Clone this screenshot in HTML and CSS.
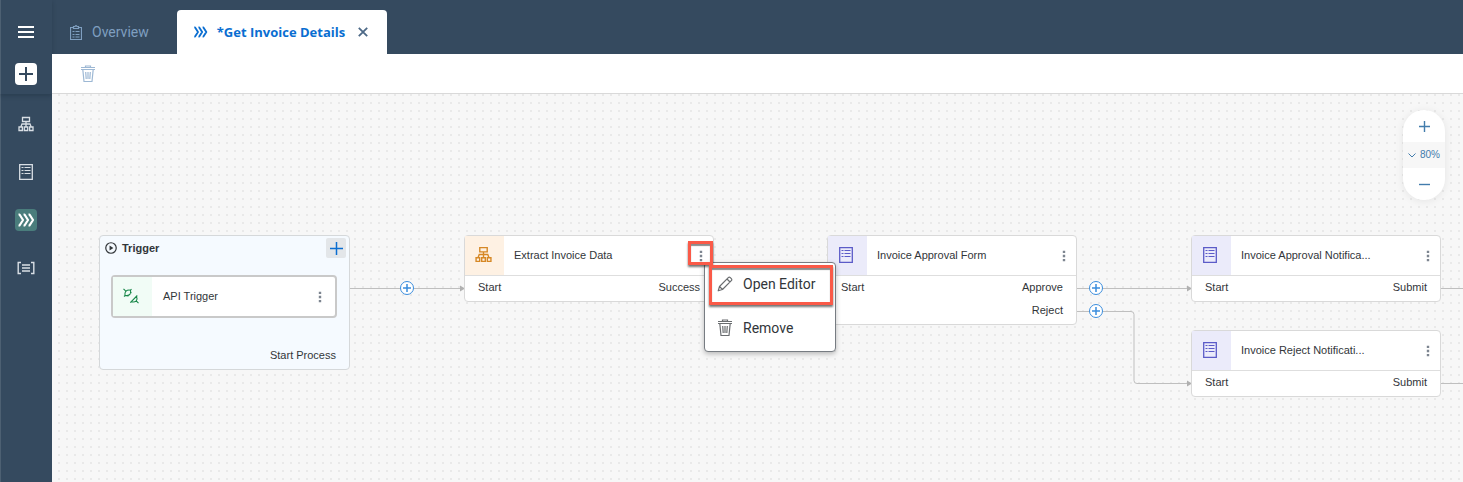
FILE: index.html
```html
<!DOCTYPE html>
<html lang="en">
<head>
<meta charset="utf-8">
<meta name="viewport" content="width=device-width, initial-scale=1">
<title>Get Invoice Details</title>
<link rel="stylesheet" href="styles.css">
</head>
<body>
<svg class="defs" aria-hidden="true">
  <symbol id="i-flow" viewBox="0 0 16 16"><g fill="none" stroke="currentColor" stroke-width="1.3"><path d="M4.500 1.500h7v4h-7zM8 5.500v5M3 10.500l1-2.500h8l1 2.500M1 11h3.400v3.500H1zM6.300 11h3.400v3.500H6.300zM11.600 11H15v3.500h-3.400z"/></g></symbol>
  <symbol id="i-form" viewBox="0 0 16 18"><g fill="none" stroke="currentColor"><path stroke-width="1.300" d="M1.700 1.700h12.600v14.600H1.700z"/><path d="M3.500 4.500h2M6.500 4.500h6M3.500 7.500h2M6.500 7.500h6M3.500 10.500h2M6.500 10.500h6"/></g></symbol>
  <symbol id="i-chev" viewBox="0 0 18 14"><path fill="none" stroke="currentColor" stroke-width="2.200" stroke-linejoin="round" d="M1.500 1.500h1L6 7l-3.500 5.500h-1M6.500 1.500h1L11 7l-3.500 5.500h-1M11.500 1.500h1L16 7l-3.500 5.500h-1"/></symbol>
  <symbol id="i-trash" viewBox="0 0 16 18"><path fill="none" stroke="currentColor" stroke-width="1.200" d="M1 2.500h14M5.500 2V1h5v1M1 4.500h14M2.800 4.500l1.200 12h8l1.200-12M5.700 7l.5 7M8 7v7M10.300 7l-.5 7"/></symbol>
  <symbol id="i-dots" viewBox="0 0 4 12"><path fill="currentColor" d="M.8.700h2.400v2.400H.8zM.8 4.800h2.400v2.400H.8zM.8 8.900h2.400v2.400H.8z"/></symbol>
  <symbol id="i-clip" viewBox="0 0 12 15"><g fill="none" stroke="currentColor" stroke-width="1.200"><path d="M3.500 2.500h-3v12h11v-12h-3M3.500 1.500h1.500L6 .5l1 1h1.500v2h-5zM5.500 6.500h4M5.500 9.500h4M5.500 12h4M2.500 6.500h2M2.500 9.500h2M2.500 12h2"/></g></symbol>
  <symbol id="i-plus" viewBox="0 0 14 14"><path fill="none" stroke="currentColor" stroke-width="2" d="M7 0v14M0 7h14"/></symbol>
</svg>

<nav class="rail" aria-label="Main">
  <div class="rail-top">
    <button class="rail-btn" aria-label="Menu"><svg width="16" height="14" viewBox="0 0 16 14"><path d="M0 2h16M0 7h16M0 12h16" stroke="currentColor" stroke-width="2"/></svg></button>
    <button class="rail-btn add" aria-label="Add"><svg width="14" height="14"><use href="#i-plus"/></svg></button>
  </div>
  <div class="rail-list">
    <button class="rail-btn" aria-label="Processes"><svg width="16" height="16"><use href="#i-flow"/></svg></button>
    <button class="rail-btn" aria-label="Forms"><svg width="16" height="18"><use href="#i-form"/></svg></button>
    <button class="rail-btn active" aria-label="Automations"><svg width="18" height="14"><use href="#i-chev"/></svg></button>
    <button class="rail-btn" aria-label="Data types"><svg width="18" height="14" viewBox="0 0 18 14"><path fill="none" stroke="currentColor" stroke-width="1.400" d="M4 1.500H1.200v11H4M14 1.500h2.800v11H14M5 4h8M5 7h8M5 10h8"/></svg></button>
  </div>
</nav>

<div class="app">
  <header class="tabs">
    <button class="tab"><svg width="12" height="15"><use href="#i-clip"/></svg><span>Overview</span></button>
    <div class="tab current">
      <button class="tab-name"><svg width="15" height="12"><use href="#i-chev"/></svg><span>*Get Invoice Details</span></button>
      <button class="close" aria-label="Close tab"><svg width="10" height="10" viewBox="0 0 10 10"><path d="M.8.800l8.400 8.400M9.200.800L.8 9.200" stroke="currentColor" stroke-width="1.800"/></svg></button>
    </div>
  </header>
  <div class="toolbar"><button class="delete" aria-label="Delete"><svg width="16" height="18"><use href="#i-trash"/></svg></button></div>

  <main class="canvas">
    <svg class="edges" aria-hidden="true">
      <g class="line">
        <path d="M298 194.500h114M1025 194.500h114M1025 217.500h54q3 0 3 3v66q0 3 3 3h54M1389 194.500h600M1389 289.500h600"/>
      </g>
      <path class="tip" d="M408 191.500l5 3-5 3zM1135 191.500l5 3-5 3zM1135 286.500l5 3-5 3z"/>
      <g class="joint">
        <g><circle cx="355" cy="194" r="6.500"/><path d="M355 190v8M351 194h8"/></g>
        <g><circle cx="1044" cy="194" r="6.500"/><path d="M1044 190v8M1040 194h8"/></g>
        <g><circle cx="1044" cy="217" r="6.500"/><path d="M1044 213v8M1040 217h8"/></g>
      </g>
    </svg>

    <section class="trigger">
      <div class="trigger-head">
        <svg width="12" height="12" viewBox="0 0 11 11"><circle cx="5.500" cy="5.500" r="4.800" fill="none" stroke="currentColor" stroke-width="1.100"/><path d="M4.200 3.200l3.500 2.300-3.500 2.300z" fill="currentColor"/></svg>
        <h2>Trigger</h2>
        <button class="trigger-add" aria-label="Add trigger"><svg width="13" height="13" viewBox="0 0 13 13"><path d="M6.500 0v13M0 6.500h13" stroke="currentColor" stroke-width="1.500"/></svg></button>
      </div>
      <div class="trigger-card">
        <span class="icon green"><svg width="16" height="16" viewBox="0 0 16 16"><path fill="none" stroke="currentColor" stroke-width="1.100" d="M.5.800l2.300 2.400M2.800 3.200Q5 1.500 7.500 2.200M2.800 3.200Q1.500 5 2 7.500M8.500 1.200L7.500 2.200q.8 3-.8 4.300Q5 8 2 7.500l-1 1M7 4.500l1.600.2M4.800 6.800l.2 1.700M15.500 15.200l-2.300-2.300M14.300 7.500l-7 7.200M13.500 8.500q1.300 2.600-.3 4.400-2 1.800-4.900.8"/></svg></span>
        <span class="name">API Trigger</span>
        <button class="more" aria-label="More"><svg width="4" height="12"><use href="#i-dots"/></svg></button>
      </div>
      <p class="out">Start Process</p>
    </section>

    <section class="node n-extract">
      <div class="node-head"><span class="icon orange"><svg width="17" height="17"><use href="#i-flow"/></svg></span><span class="name">Extract Invoice Data</span><button class="more" aria-label="More"><svg width="4" height="12"><use href="#i-dots"/></svg></button></div>
      <div class="ports"><span>Start</span><span>Success</span></div>
    </section>
    <section class="node n-form">
      <div class="node-head"><span class="icon violet"><svg width="16" height="18"><use href="#i-form"/></svg></span><span class="name">Invoice Approval Form</span><button class="more" aria-label="More"><svg width="4" height="12"><use href="#i-dots"/></svg></button></div>
      <div class="ports"><span>Start</span><span>Approve</span></div>
      <div class="ports"><span></span><span>Reject</span></div>
    </section>
    <section class="node n-approved">
      <div class="node-head"><span class="icon violet"><svg width="16" height="18"><use href="#i-form"/></svg></span><span class="name">Invoice Approval Notifica...</span><button class="more" aria-label="More"><svg width="4" height="12"><use href="#i-dots"/></svg></button></div>
      <div class="ports"><span>Start</span><span>Submit</span></div>
    </section>
    <section class="node n-rejected">
      <div class="node-head"><span class="icon violet"><svg width="16" height="18"><use href="#i-form"/></svg></span><span class="name">Invoice Reject Notificati...</span><button class="more" aria-label="More"><svg width="4" height="12"><use href="#i-dots"/></svg></button></div>
      <div class="ports"><span>Start</span><span>Submit</span></div>
    </section>

    <div class="menu" role="menu">
      <button role="menuitem"><svg width="16" height="16" viewBox="0 0 16 16"><path fill="none" stroke="currentColor" stroke-width="1.200" stroke-linejoin="round" d="M1.200 14.800l1.300-4.300 8.800-8.800q1-1 2 0l1 1q1 1 0 2l-8.800 8.800zM10 3l3 3M2.500 10.500l3 3"/></svg><span>Open Editor</span></button>
      <button role="menuitem"><svg width="16" height="18"><use href="#i-trash"/></svg><span>Remove</span></button>
    </div>
    <div class="mark mark-more"></div>
    <div class="mark mark-open"></div>

    <div class="zoom">
      <button aria-label="Zoom in"><svg width="11" height="11" viewBox="0 0 11 11"><path d="M5.500 0v11M0 5.500h11" stroke="currentColor" stroke-width="1.400"/></svg></button>
      <button class="level"><svg width="8" height="5" viewBox="0 0 8 5"><path d="M.5.500L4 4 7.500.500" fill="none" stroke="currentColor"/></svg><span>80%</span></button>
      <button aria-label="Zoom out"><svg width="11" height="11" viewBox="0 0 11 11"><path d="M0 5.500h11" stroke="currentColor" stroke-width="1.400"/></svg></button>
    </div>
  </main>
</div>
</body>
</html>
```
FILE: styles.css
```css
* { box-sizing: border-box; }
body {
  margin: 0;
  min-height: 100vh;
  display: flex;
  background: #354a5f;
  color: #32363a;
  font-family: Roboto, "Open Sans", sans-serif;
  font-size: 14px;
}
button {
  margin: 0;
  padding: 0;
  border: 0;
  background: none;
  color: inherit;
  font: inherit;
  cursor: pointer;
}
svg { display: block; flex: none; }
h2, p { margin: 0; }
.defs { position: absolute; width: 0; height: 0; }

/* Left rail */
.rail {
  flex: none;
  width: 52px;
  box-shadow: inset 1px 0 #4d6072;
  color: #d9dfe5;
}
.rail-top {
  display: flex;
  flex-direction: column;
  align-items: center;
  gap: 20px;
  padding: 21px 0 9px;
  color: #fff;
  box-shadow: 0 2px 4px rgba(20, 35, 50, .3);
}
.rail-list {
  display: flex;
  flex-direction: column;
  align-items: center;
  gap: 26px;
  padding-top: 19px;
}
.rail-btn {
  display: grid;
  place-items: center;
  width: 22px;
  height: 22px;
  border-radius: 4px;
}
.add { background: #fff; color: #354a5f; }
.active { background: #4a7d7c; color: #fff; }

/* Tabs and toolbar */
.app {
  flex: 1;
  min-width: 0;
  display: flex;
  flex-direction: column;
}
.tabs {
  display: flex;
  align-items: flex-end;
  padding: 10px 0 0;
}
.tab {
  display: flex;
  align-items: center;
  height: 44px;
  gap: 10px;
  padding: 0 28px 0 18px;
  color: #7f9fc0;
}
.tab.current {
  gap: 13px;
  padding: 0 19px 0 16px;
  border-radius: 4px 4px 0 0;
  background: #fff;
  color: #0a6ed1;
  font-family: "Open Sans", Roboto, sans-serif;
  font-size: 13px;
  font-weight: 700;
}
.tab-name { display: flex; align-items: center; gap: 9px; }
.close { color: #4d6987; }
.toolbar {
  display: flex;
  align-items: center;
  height: 40px;
  padding: 0 28px;
  background: #fff;
  border-bottom: 1px solid #d9d9d9;
}
.delete { color: #9db8d4; }

/* Canvas */
.canvas {
  position: relative;
  flex: 1;
  overflow: hidden;
  background: #f7f7f7 radial-gradient(circle, #e9e9e9 1px, transparent 1px) 3px 5px / 8px 8px;
  font-family: "Liberation Sans", Arial, sans-serif;
  font-size: 11px;
  line-height: 14px;
}
.edges {
  position: absolute;
  inset: 0;
  width: 100%;
  height: 100%;
}
.line { fill: none; stroke: #bfbfbf; }
.tip { fill: #b0b0b0; }
.joint { fill: #fff; stroke: #3a8ddd; }
.joint path { stroke-width: 1.500; }

.trigger {
  position: absolute;
  left: 47px;
  top: 141px;
  width: 251px;
  padding: 2px 3px 7px 5px;
  border: 1px solid #d5d8da;
  border-radius: 4px;
  background: #f5faff;
}
.trigger-head { display: flex; align-items: center; gap: 5px; }
.trigger-head h2 { flex: 1; font-size: 11px; line-height: 14px; }
.trigger-add {
  display: grid;
  place-items: center;
  width: 20px;
  height: 20px;
  border-radius: 2px;
  background: #e3e6e9;
  color: #0a6ed1;
}
.trigger-card {
  display: flex;
  height: 43px;
  margin: 17px 9px 30px 6px;
  border: 2px solid #c9c9c9;
  border-radius: 4px;
  background: #fff;
}
.trigger-card .name { padding-left: 11px; }
.out { padding-right: 10px; text-align: right; }

.icon {
  flex: none;
  display: grid;
  place-items: center;
  width: 39px;
  padding: 0 3px 2px 0;
}
.green { background: #f1fcf6; color: #188749; }
.orange { background: #fef1e3; color: #d68825; }
.violet { background: #ebebfa; color: #5b5bc8; }
.name { flex: 1; align-self: center; padding: 0 0 2px 10px; white-space: nowrap; }
.more { width: 24px; display: grid; place-items: center; color: #7d8590; }
.trigger-card .more { width: 30px; }

.node {
  position: absolute;
  width: 250px;
  padding-bottom: 2px;
  border: 1px solid #d9d9d9;
  border-radius: 4px;
  background: #fff;
}
.node-head {
  display: flex;
  height: 40px;
  border-bottom: 1px solid #dedede;
}
.ports {
  display: flex;
  justify-content: space-between;
  height: 23px;
  padding: 4px 13px 0;
}
.n-extract { left: 412px; top: 141px; }
.n-form { left: 775px; top: 141px; }
.n-approved { left: 1139px; top: 141px; }
.n-rejected { left: 1139px; top: 236px; }

/* Context menu with highlights */
.menu {
  position: absolute;
  left: 652px;
  top: 168px;
  width: 132px;
  border: 1px solid #777c82;
  border-radius: 4px;
  background: #fff;
  box-shadow: 0 2px 5px rgba(0, 0, 0, .25);
  font-family: Roboto, "Open Sans", sans-serif;
  font-size: 14px;
}
.menu button {
  display: flex;
  align-items: center;
  gap: 10px;
  width: 100%;
  height: 44px;
  padding: 0 0 2px 12px;
}
.menu svg { color: #6a6d70; }
.mark {
  position: absolute;
  border: 3px solid #fa5a48;
  box-shadow: 0 2px 2px rgba(0, 0, 0, .55), inset 0 2px 1px rgba(0, 0, 0, .45);
  pointer-events: none;
}
.mark-more { left: 636px; top: 147px; width: 25px; height: 24px; }
.mark-open { left: 657px; top: 171px; width: 124px; height: 40px; }

/* Zoom control */
.zoom {
  position: absolute;
  right: 18px;
  top: 16px;
  width: 42px;
  border-radius: 21px;
  background: #fff;
  box-shadow: 0 1px 8px rgba(0, 0, 0, .08);
  color: #427cac;
  font-size: 10px;
}
.zoom button {
  display: flex;
  align-items: center;
  justify-content: center;
  gap: 4px;
  width: 100%;
  height: 32px;
}
.zoom .level { height: 26px; background: #f7f7f7; }
```
